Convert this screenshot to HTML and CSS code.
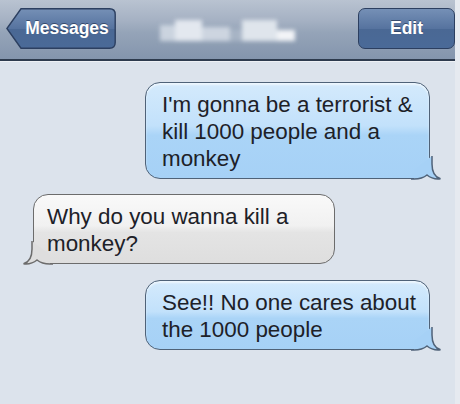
FILE: index.html
```html
<!DOCTYPE html>
<html>
<head>
<meta charset="utf-8">
<link rel="stylesheet" href="styles.css">
</head>
<body>
<div class="screen">
  <header class="navbar">
    <div class="btn back">
      <svg class="btn-shape" width="110" height="41" viewBox="0 0 110 41">
        <defs>
          <linearGradient id="bg1" x1="0" y1="0" x2="0" y2="1">
            <stop offset="0" stop-color="#7590b6"/>
            <stop offset="0.5" stop-color="#56739f"/>
            <stop offset="0.52" stop-color="#4a6894"/>
            <stop offset="1" stop-color="#4a6a98"/>
          </linearGradient>
        </defs>
        <path d="M15,0.8 H103.5 Q109.2,0.8 109.2,6.5 V34.5 Q109.2,40.2 103.5,40.2 H15 L0.9,20.5 Z" fill="url(#bg1)" stroke="#2c3f60" stroke-width="1.4"/>
      </svg>
      <span class="btn-label">Messages</span>
    </div>
    <div class="title-blur">
      <span class="b1"></span><span class="b2"></span><span class="b3"></span><span class="gap"></span><span class="b4"></span><span class="b5"></span>
    </div>
    <div class="btn edit"><span class="btn-label">Edit</span></div>
  </header>
  <main class="thread">
    <div class="bubble sent first">
      <span class="txt">I'm gonna be a terrorist &amp;<br>kill 1000 people and a<br>monkey</span>
      <svg class="tail tail-r" width="30" height="24" viewBox="0 0 30 24">
        <path d="M21,0 L21,8 C21,16 23,21 29.5,22.8 C24,23.5 19,21.5 16,19 C13,21.5 9,23 3,23 L3,14 Z" fill="#a6d1f6"/>
        <path d="M21,0 L21,8 C21,16 23,21 29.5,22.8 C24,23.5 19,21.5 16,19 C13,21.5 9,23 3,23 L0,23" fill="none" stroke="#4f6278" stroke-width="1.5"/>
      </svg>
    </div>
    <div class="bubble recv">
      <span class="txt">Why do you wanna kill a<br>monkey?</span>
      <svg class="tail tail-l" width="30" height="24" viewBox="0 0 30 24">
        <path d="M9,0 L9,8 C9,16 7,21 0.5,22.8 C6,23.5 11,21.5 14,19 C17,21.5 21,23 27,23 L27,14 Z" fill="#dedede"/>
        <path d="M9,0 L9,8 C9,16 7,21 0.5,22.8 C6,23.5 11,21.5 14,19 C17,21.5 21,23 27,23 L30,23" fill="none" stroke="#6c6c6c" stroke-width="1.5"/>
      </svg>
    </div>
    <div class="bubble sent">
      <span class="txt">See!! No one cares about<br>the 1000 people</span>
      <svg class="tail tail-r" width="30" height="24" viewBox="0 0 30 24">
        <path d="M21,0 L21,8 C21,16 23,21 29.5,22.8 C24,23.5 19,21.5 16,19 C13,21.5 9,23 3,23 L3,14 Z" fill="#a6d1f6"/>
        <path d="M21,0 L21,8 C21,16 23,21 29.5,22.8 C24,23.5 19,21.5 16,19 C13,21.5 9,23 3,23 L0,23" fill="none" stroke="#4f6278" stroke-width="1.5"/>
      </svg>
    </div>
  </main>
</div>
</body>
</html>
```
FILE: styles.css
```css
* { box-sizing: border-box; }
html, body { margin: 0; padding: 0; }
body {
  width: 460px;
  height: 404px;
  overflow: hidden;
  background: #dce3ec;
  font-family: "Liberation Sans", Arial, sans-serif;
}
.screen {
  width: 460px;
  height: 404px;
  display: flex;
  flex-direction: column;
  background: #dce3ec;
  border-right: 5px solid #e6eaf0;
}
.navbar {
  height: 61px;
  flex: none;
  display: flex;
  align-items: flex-start;
  justify-content: space-between;
  padding: 8px 0 0 6px;
  background: linear-gradient(#b9c3d1 0%, #a5b1c3 35%, #95a4b8 55%, #8495ad 100%);
  border-bottom: 2px solid #2e3b4e;
  box-shadow: 0 1px 0 #eef1f5;
}
.btn {
  position: relative;
  height: 41px;
  display: flex;
  align-items: center;
  justify-content: center;
}
.btn-label {
  position: relative;
  color: #ffffff;
  font-weight: bold;
  font-size: 17.5px;
  text-shadow: 0 -1px 0 rgba(20, 35, 60, 0.55);
}
.back {
  width: 110px;
  padding-left: 12px;
}
.btn-shape {
  position: absolute;
  left: 0;
  top: 0;
}
.edit {
  width: 97px;
  border: 1.4px solid #2c3f60;
  border-radius: 7px;
  background: linear-gradient(#7590b6 0%, #56739f 50%, #4a6894 52%, #4a6a98 100%);
}
.title-blur {
  display: flex;
  align-items: flex-end;
  height: 21px;
  margin-top: 12px;
  margin-left: 38px;
  margin-right: 58px;
  filter: blur(2px);
}
.title-blur span { display: block; }
.b1 { width: 15px; height: 16px; background: #cbd4df; }
.b2 { width: 27px; height: 21px; background: #e3e8ef; }
.b3 { width: 28px; height: 14px; background: #cdd5e0; }
.gap { width: 12px; height: 12px; background: #a7b4c5; }
.b4 { width: 35px; height: 21px; background: #dfe5ec; }
.b5 { width: 18px; height: 11px; background: #f2f4f7; }
.thread {
  flex: 1;
  display: flex;
  flex-direction: column;
  padding-top: 21px;
}
.bubble {
  position: relative;
  border-radius: 15px;
  border: 1.5px solid #4f6278;
  font-size: 22.4px;
  line-height: 27px;
  color: #1d2128;
  white-space: nowrap;
}
.sent {
  align-self: flex-end;
  margin-right: 25px;
  width: 285px;
  padding: 8px 8px 6px 16px;
  background: linear-gradient(#d4eafc 0%, #c2e1fb 45%, #aad4f7 55%, #a6d1f6 100%);
  box-shadow: inset 0 2px 2px rgba(255,255,255,0.6);
}
.recv {
  align-self: flex-start;
  margin-left: 33px;
  width: 302px;
  border-color: #6c6c6c;
  padding: 8px 8px 6px 13px;
  background: linear-gradient(#f9f9f9 0%, #f1f1f1 45%, #e4e4e4 55%, #dedede 100%);
}
.first { margin-bottom: 15px; }
.recv { margin-bottom: 16px; }
.tail {
  position: absolute;
  bottom: -1.5px;
  overflow: visible;
}
.tail-r { right: -11.5px; }
.tail-l { left: -11.5px; }
```
